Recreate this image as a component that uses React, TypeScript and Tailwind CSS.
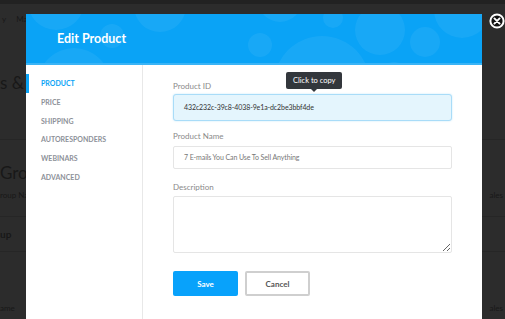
import { useState } from "react";

const TABS = ["PRODUCT", "PRICE", "SHIPPING", "AUTORESPONDERS", "WEBINARS", "ADVANCED"] as const;

const BUBBLES = [
  { cx: 30, cy: -12, r: 28 },
  { cx: 86, cy: 22, r: 12 },
  { cx: 48, cy: 70, r: 36 },
  { cx: 134, cy: -8, r: 26 },
  { cx: 234, cy: 31, r: 12 },
  { cx: 254, cy: -14, r: 22 },
  { cx: 296, cy: 70, r: 48 },
  { cx: 307, cy: 4, r: 10 },
  { cx: 354, cy: 16, r: 25 },
  { cx: 399, cy: 28, r: 15 },
  { cx: 436, cy: -4, r: 28 },
  { cx: 368, cy: 62, r: 14 },
];

const CloseIcon = () => (
  <svg width="16" height="16" viewBox="0 0 16 16">
    <circle cx="8" cy="8" r="6.6" fill="#111" stroke="#fff" strokeWidth="2" />
    <path d="M5.4 5.4 L10.6 10.6 M10.6 5.4 L5.4 10.6" stroke="#fff" strokeWidth="1.9" strokeLinecap="round" />
  </svg>
);

// the page behind the dimmed overlay
const BackgroundPage = () => (
  <div className="h-full w-full bg-[#2c2c2c] text-[#181818] font-['Lato',sans-serif]">
    <div className="h-[4px] bg-[#222]" />
    <div className="flex h-[30px] items-center gap-[10px] px-[2px] text-[8px]">
      <span>y</span>
      <span>Main</span>
    </div>
    <div className="flex h-[96px] items-center text-[17px] leading-none">s &amp; P</div>
    <div className="h-[10px] border-b border-[#262626]" />
    <div className="flex h-[41px] items-end text-[17px] leading-none">Group</div>
    <div className="flex h-[20px] items-end justify-between text-[8px] leading-[12px]">
      <span>roup Na</span>
      <span className="pr-[2px]">ales</span>
    </div>
    <div className="h-[16px] border-b border-[#262626]" />
    <div className="flex h-[35px] items-center border-b border-[#262626] text-[10px] font-bold">up</div>
    <div className="flex h-[62px] items-end justify-between text-[8px] leading-[12px]">
      <span>ame</span>
      <span className="pr-[2px]">ales</span>
    </div>
  </div>
);

export default function App() {
  const [active, setActive] = useState<string>("PRODUCT");

  return (
    <div className="relative h-[319px] w-[505px] overflow-hidden font-['Lato',sans-serif]">
      <BackgroundPage />

      <button className="absolute left-[489px] top-[13px]">
        <CloseIcon />
      </button>

      <div className="absolute left-[26px] top-[14px] flex h-[305px] w-[456px] flex-col bg-white">
        <div className="relative h-[51px] shrink-0 overflow-hidden border-b-2 border-[#3ab4f6] bg-[#0aa3f6]">
          <svg className="absolute inset-0" width="456" height="51">
            {BUBBLES.map((b, i) => (
              <circle key={i} cx={b.cx} cy={b.cy} r={b.r} fill="#ffffff" fillOpacity="0.06" />
            ))}
          </svg>
          <h2 className="relative pl-[31px] pt-[17px] text-[12.5px] font-bold leading-[16px] text-white">
            Edit Product
          </h2>
        </div>

        <div className="flex flex-1">
          <nav className="flex w-[117px] shrink-0 flex-col border-r border-[#e8e8e8] pt-[9px]">
            {TABS.map((tab) => {
              const isActive = active === tab;
              return (
                <button
                  key={tab}
                  onClick={() => setActive(tab)}
                  className={`h-[18.8px] border-l-[3px] pl-[12px] text-left text-[7px] font-bold leading-[18.8px] ${
                    isActive ? "border-[#0aa3f6] text-[#0aa3f6]" : "border-transparent text-[#8d9199]"
                  }`}
                >
                  {tab}
                </button>
              );
            })}
          </nav>

          <div className="flex-1 px-[30px] pt-[15px]">
            <label className="block h-[12px] text-[8px] leading-[12px] text-[#8a8a8a]">Product ID</label>
            <div className="relative mt-[2px]">
              <div className="absolute left-[113px] top-[-22px] flex flex-col items-center">
                <div className="rounded-[2px] bg-[#33373c] px-[7px] py-[4px] text-[7.5px] leading-[9px] text-white">
                  Click to copy
                </div>
                <div className="h-0 w-0 border-x-[3px] border-t-[3px] border-x-transparent border-t-[#33373c]" />
              </div>
              <div className="flex h-[27px] items-center rounded-[3px] border border-[#a9dcf8] bg-[#e4f5fd] px-[10px] text-[7px] tracking-[-0.1px] text-[#333] shadow-[0_0_2px_#bfe6fb]">
                432c232c-39c8-4038-9e1a-dc2be3bbf4de
              </div>
            </div>

            <label className="mt-[9px] block h-[12px] text-[8px] leading-[12px] text-[#8a8a8a]">Product Name</label>
            <div className="mt-[4px] flex h-[23px] items-center rounded-[2px] border border-[#e5e5e5] px-[10px] text-[7px] tracking-[-0.1px] text-[#777]">
              7 E-mails You Can Use To Sell Anything
            </div>

            <label className="mt-[12px] block h-[12px] text-[8px] leading-[12px] text-[#8a8a8a]">Description</label>
            <textarea className="mt-[3px] block h-[57px] w-full rounded-[2px] border border-[#e5e5e5]" />

            <div className="mt-[18px] flex gap-[7px]">
              <button className="h-[25px] w-[65px] rounded-[2px] bg-[#08a2fb] text-[8px] font-bold text-white">
                Save
              </button>
              <button className="h-[25px] w-[65px] rounded-[2px] border-2 border-[#cfcfcf] bg-white text-[8px] font-bold text-[#555]">
                Cancel
              </button>
            </div>
          </div>
        </div>
      </div>
    </div>
  );
}
